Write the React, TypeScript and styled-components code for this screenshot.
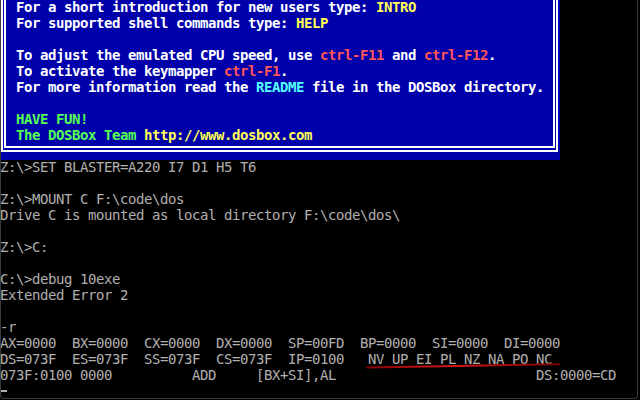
import React from 'react';
import styled, { createGlobalStyle } from 'styled-components';

const GlobalStyle = createGlobalStyle`
  html, body {
    margin: 0;
    padding: 0;
    background: #000;
  }
  body {
    width: 640px;
    height: 400px;
    overflow: hidden;
  }
`;

const tones = {
  white: '#ffffff',
  gray: '#b0b0b0',
  yellow: '#ffff55',
  red: '#ff5555',
  cyan: '#55ffff',
  green: '#55ff55',
} as const;

type Tone = keyof typeof tones;
type Seg = [string, Tone?];

const Screen = styled.div`
  position: relative;
  width: 640px;
  height: 400px;
  background: #000;
  overflow: hidden;
  font-family: 'DejaVu Sans Mono', 'Liberation Mono', monospace;
  font-size: 14px;
  letter-spacing: -0.43px;
  color: ${tones.gray};
`;

const Bezel = styled.div`
  position: absolute;
  top: 0;
  left: 0;
  right: 2px;
  bottom: 1px;
  border: 1px solid #3a3a3a;
  border-top: none;
  border-radius: 0 0 4px 4px;
  pointer-events: none;
`;

const Banner = styled.div`
  width: 560px;
  height: 160px;
  box-sizing: border-box;
  padding: 0 2px 8px 1px;
  background: #0000aa;
`;

const OuterFrame = styled.div`
  height: 100%;
  box-sizing: border-box;
  border: 2px solid #fff;
  border-top: none;
  padding: 0 1px 2px 1px;
`;

const InnerFrame = styled.div`
  height: 100%;
  box-sizing: border-box;
  border: 2px solid #fff;
  border-top: none;
  padding-left: 10px;
  font-weight: bold;
  color: ${tones.white};
`;

// 16px text cell, baseline pulled up to sit ~12px from the top like the VGA font
const Line = styled.div`
  position: relative;
  height: 16px;
  line-height: 14px;
  white-space: pre;
`;

const Hl = styled.span<{ $tone: Tone }>`
  color: ${(p) => tones[p.$tone]};
`;

const Cursor = styled.div`
  width: 7px;
  height: 2px;
  margin-top: 6px;
  background: ${tones.gray};
`;

const Scribble = styled.svg`
  position: absolute;
  left: 0;
  top: 0;
  width: 640px;
  height: 16px;
  overflow: visible;
`;

const banner: Seg[][] = [
  [['For a short introduction for new users type: '], ['INTRO', 'yellow']],
  [['For supported shell commands type: '], ['HELP', 'yellow']],
  [],
  [['To adjust the emulated CPU speed, use '], ['ctrl-F11', 'red'], [' and '], ['ctrl-F12', 'red'], ['.']],
  [['To activate the keymapper '], ['ctrl-F1', 'red'], ['.']],
  [['For more information read the '], ['README', 'cyan'], [' file in the DOSBox directory.']],
  [],
  [['HAVE FUN!', 'green']],
  [['The DOSBox Team ', 'green'], ['http://www.dosbox.com', 'yellow']],
];

const shell: string[] = [
  'Z:\\>SET BLASTER=A220 I7 D1 H5 T6',
  '',
  'Z:\\>MOUNT C F:\\code\\dos',
  'Drive C is mounted as local directory F:\\code\\dos\\',
  '',
  'Z:\\>C:',
  '',
  'C:\\>debug 10exe',
  'Extended Error 2',
  '',
  '-r',
  'AX=0000  BX=0000  CX=0000  DX=0000  SP=00FD  BP=0000  SI=0000  DI=0000',
  'DS=073F  ES=073F  SS=073F  CS=073F  IP=0100   NV UP EI PL NZ NA PO NC',
  '073F:0100 0000          ADD     [BX+SI],AL                         DS:0000=CD',
];

// the flags row got a red pen stroke under it
const FLAGS_ROW = 12;

const App = () => {
  return (
    <>
      <GlobalStyle />
      <Screen>
        <Banner>
          <OuterFrame>
            <InnerFrame>
              {banner.map((segs, i) => (
                <Line key={i}>
                  {segs.map(([text, tone], j) =>
                    tone ? (
                      <Hl key={j} $tone={tone}>
                        {text}
                      </Hl>
                    ) : (
                      <React.Fragment key={j}>{text}</React.Fragment>
                    ),
                  )}
                </Line>
              ))}
            </InnerFrame>
          </OuterFrame>
        </Banner>
        {shell.map((text, i) => (
          <Line key={i}>
            {text}
            {i === FLAGS_ROW && (
              <Scribble viewBox="0 0 640 16">
                <defs>
                  <linearGradient id="pen" x1="0" x2="1" y1="0" y2="0">
                    <stop offset="0" stopColor="#8a0000" />
                    <stop offset="0.45" stopColor="#d81818" />
                    <stop offset="1" stopColor="#7a0000" />
                  </linearGradient>
                </defs>
                <path d="M367 15.6 C 430 14.6, 500 13.2, 559 12.2" stroke="url(#pen)" strokeWidth="2" fill="none" strokeLinecap="round" />
              </Scribble>
            )}
          </Line>
        ))}
        <Line>
          <Cursor />
        </Line>
        <Bezel />
      </Screen>
    </>
  );
};

export default App;
